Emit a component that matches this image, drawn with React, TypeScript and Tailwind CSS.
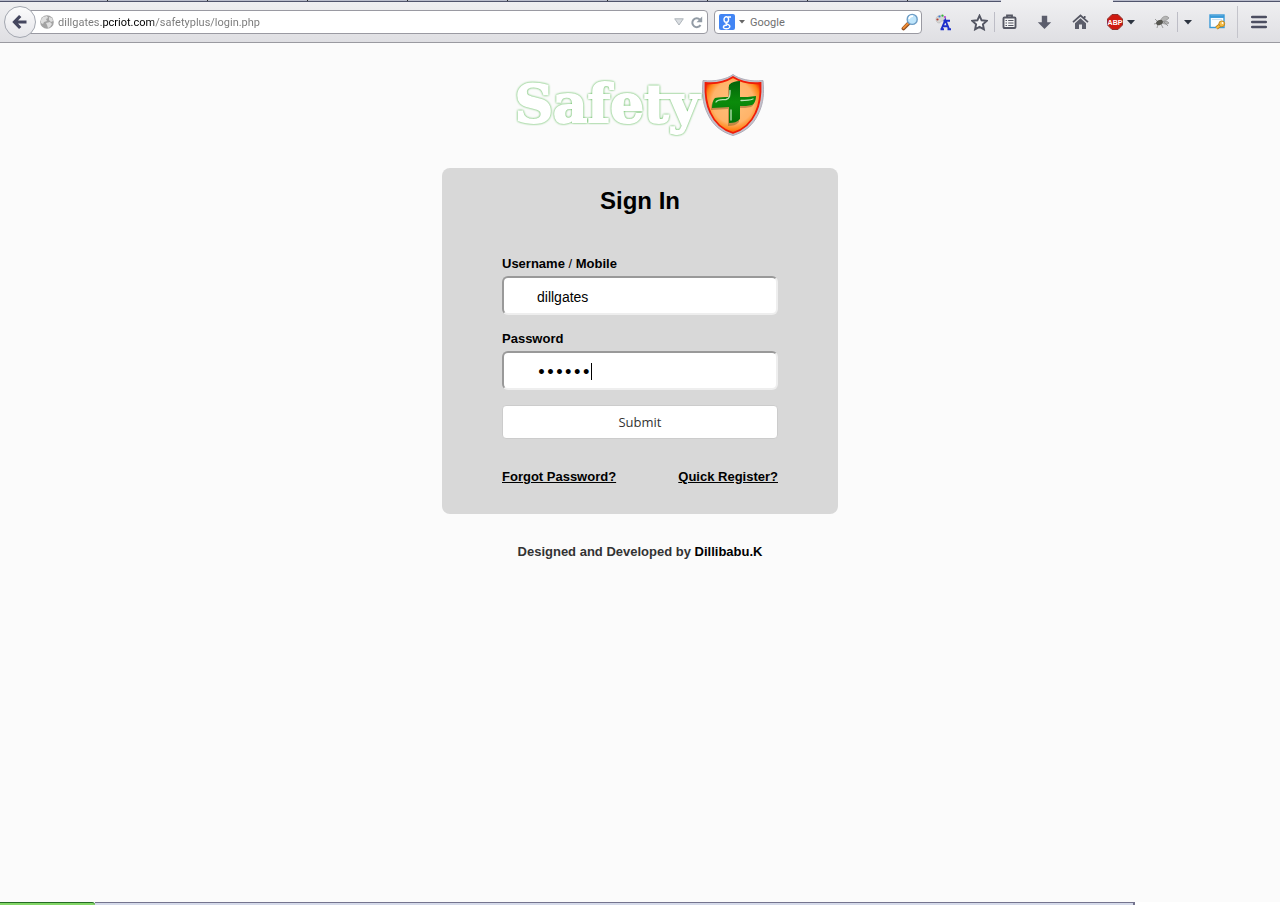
import React from "react";

const tabs = Array.from({ length: 9 }, (_, i) => i);

function Caret() {
  return (
    <svg width="8" height="5" viewBox="0 0 8 5" aria-hidden="true">
      <path d="M0 0h8L4 4.6z" fill="#2d3440" />
    </svg>
  );
}

function Divider() {
  return <span className="h-5 w-px bg-[#bdbdc6]" />;
}

function ToolButton({ label, width, children }: { label: string; width: string; children: React.ReactNode }) {
  return (
    <button type="button" aria-label={label} className={`flex h-full shrink-0 items-center justify-center gap-1 ${width}`}>
      {children}
    </button>
  );
}

function TabStrip() {
  return (
    <div className="flex h-[2px] bg-[#ebebee]">
      <div className="flex flex-1 border-b border-[#50546c] bg-[#b9bccb]">
        <span className="w-[8px]" />
        {tabs.map((i) => (
          <span key={i} className="w-[100px] border-r border-[#2c2f2c]" />
        ))}
      </div>
      <span className="w-[112px] rounded-t-sm bg-[#efeff1]" />
      <span className="w-[167px] border-b border-[#50546c] bg-[#b9bccb]" />
    </div>
  );
}

function UrlBar() {
  return (
    <div className="flex min-w-0 flex-1 items-center pl-1">
      <button
        type="button"
        aria-label="Back"
        className="z-10 flex h-8 w-8 shrink-0 items-center justify-center rounded-full border border-[#a3a7b0] bg-linear-to-b from-[#fbfbfc] to-[#e6e6ea]"
      >
        <svg width="16" height="16" viewBox="0 0 16 16" aria-hidden="true">
          <path d="M8.2 2 2.5 8l5.700 6M3 8h11.500" fill="none" stroke="#44465e" strokeWidth="3.200" />
        </svg>
      </button>
      <div className="-ml-2 flex h-6 min-w-0 flex-1 items-center rounded-r-sm border border-[#9a9aa2] bg-white pr-1 pl-[11px]">
        <svg width="14" height="14" viewBox="0 0 14 14" aria-hidden="true" className="shrink-0">
          <circle cx="7" cy="7" r="6.800" fill="#a3a3a3" />
          <path d="M1 5 3 2l4-1 1 2-2 1 1 2-3 1-1 2-2-1zM9 2l3 1 1 3-2 1-2-2zM6 8l4-1 2 2-2 3-2 1-1-3z" fill="#dedede" />
        </svg>
        <input
          aria-label="Address"
          defaultValue="dillgates.pcriot.com/safetyplus/login.php"
          className="mt-px ml-1 h-5 min-w-0 flex-1 bg-[linear-gradient(90deg,#777_43px,#000_43px,#000_96px,#777_96px)] bg-clip-text font-[Roboto,sans-serif] text-[11px] text-transparent outline-none"
        />
        <button type="button" aria-label="Show history" className="mr-[6px]">
          <svg width="10" height="8" viewBox="0 0 10 8" aria-hidden="true">
            <path d="M.7.8h8.600L5 7z" fill="#d9dde1" stroke="#aeb4ba" />
          </svg>
        </button>
        <button type="button" aria-label="Reload">
          <svg width="13" height="13" viewBox="0 0 13 13" aria-hidden="true">
            <path d="M10 3.800A4.400 4.400 0 1 0 10.500 9" fill="none" stroke="#929ba5" strokeWidth="2" />
            <path d="M12.200.6v5.700H6.500z" fill="#929ba5" />
          </svg>
        </button>
      </div>
    </div>
  );
}

function SearchBar() {
  return (
    <div className="ml-[6px] flex h-6 w-[208px] shrink-0 items-center rounded-sm border border-[#9a9aa2] bg-white pr-[2px] pl-1">
      <button type="button" aria-label="Choose search engine" className="flex items-center gap-1">
        <span className="flex h-4 w-4 items-center justify-center rounded-xs bg-[#4285f4]">
          <svg width="12" height="15" viewBox="0 0 12 15" fill="none" stroke="#fff" strokeWidth="1.400" aria-hidden="true">
            <ellipse cx="5.300" cy="4.600" rx="2.300" ry="2.800" />
            <path d="M7 2h3M6.500 7.200c-3 1-1 1.600.8 2.400 3 1.500 1.300 4.200-2 4.200-4 0-4-3.600.8-3.800" />
          </svg>
        </span>
        <svg width="6" height="4" viewBox="0 0 6 4" aria-hidden="true">
          <path d="M0 0h6L3 3.500z" fill="#666" />
        </svg>
      </button>
      <input
        aria-label="Search"
        placeholder="Google"
        className="mt-px ml-[5px] h-5 min-w-0 flex-1 bg-transparent font-[Roboto,sans-serif] text-[11px] text-black outline-none placeholder:text-[#707070]"
      />
      <button type="button" aria-label="Search the web">
        <svg width="18" height="18" viewBox="0 0 18 18" aria-hidden="true">
          <path d="m2.500 15.500 5.300-5.300" stroke="#8b4d21" strokeWidth="3.800" strokeLinecap="round" />
          <path d="m2.500 15 4.500-4.500" stroke="#ef8c36" strokeWidth="2" strokeLinecap="round" />
          <circle cx="11.200" cy="6.400" r="5" fill="#bfe5fb" stroke="#6d9dc6" strokeWidth="1.400" />
          <path d="M8 6c.4-2 1.800-3 4-2.800" stroke="#fff" strokeWidth="1.600" fill="none" />
        </svg>
      </button>
    </div>
  );
}

function Toolbar() {
  return (
    <div className="flex h-[41px] items-center border-b border-[#9a9aa0] bg-linear-to-b from-[#efeff1] to-[#dfdfe3]">
      <UrlBar />
      <SearchBar />
      <ToolButton label="Text colours" width="w-[42px]">
        <svg width="17" height="17" viewBox="0 0 17 17" aria-hidden="true">
          <path d="M1 5c0-4 7-5 9-2 2 2-1 4-3 4S6 9 4 9 1 7 1 5z" fill="#d5d5d3" stroke="#b5b5b5" strokeWidth=".6" />
          <circle cx="2.500" cy="5.500" r="1.100" fill="#b53c35" />
          <circle cx="4.500" cy="2.500" r="1.100" fill="#3d7ad4" />
          <circle cx="7.500" cy="1.700" r="1.100" fill="#36b53a" />
          <circle cx="10" cy="3" r="1.100" fill="#bd43d2" />
          <path d="M6.500 15.200 10.300 6l3.700 9.200M8 12.200h5M5.500 15.200h3.500m3.500 0h3.500M8.500 6.700h6.500" stroke="#1d2fcb" strokeWidth="1.900" fill="none" />
        </svg>
      </ToolButton>
      <ToolButton label="Bookmark this page" width="w-[30px]">
        <svg width="17" height="17" viewBox="0 0 17 17" aria-hidden="true">
          <path d="m8.500 1.700 2.100 4.600 5 .6-3.700 3.400 1 5-4.400-2.500-4.400 2.500 1-5L1.400 6.900l5-.6z" fill="#f3f3f5" stroke="#535562" strokeWidth="1.900" />
        </svg>
      </ToolButton>
      <Divider />
      <ToolButton label="Bookmarks" width="w-[29px]">
        <svg width="15" height="16" viewBox="0 0 15 16" aria-hidden="true">
          <path d="M5 3V1.500h5V3" fill="none" stroke="#555763" strokeWidth="1.800" />
          <rect x="1.500" y="3.500" width="12" height="10.500" rx="1" fill="#f4f4f5" stroke="#555763" strokeWidth="1.900" />
          <path d="M3.500 6.500h1.500m1.200 0h5.300M3.500 9h1.500m1.200 0h5.300M3.500 11.500h1.500m1.200 0h5.300" stroke="#555763" strokeWidth="1.100" />
        </svg>
      </ToolButton>
      <ToolButton label="Downloads" width="w-10">
        <svg width="15" height="15" viewBox="0 0 15 15" aria-hidden="true">
          <path d="M4.800.8h5.400v6.400h4L7.500 14 .8 7.200h4z" fill="#5b5d6c" />
        </svg>
      </ToolButton>
      <ToolButton label="Home" width="w-8">
        <svg width="17" height="16" viewBox="0 0 17 16" aria-hidden="true">
          <path d="m1 8.200 7.500-6.700L16 8.200M12.700 4V2" fill="none" stroke="#555763" strokeWidth="1.700" />
          <path d="M3 9.200 8.500 4.300 14 9.200V15h-4v-4.500H7V15H3z" fill="#5b5d6a" />
        </svg>
      </ToolButton>
      <ToolButton label="Adblock Plus" width="w-[50px]">
        <svg width="16" height="16" viewBox="0 0 16 16" aria-hidden="true">
          <path d="M5 .5h6L15.500 5v6L11 15.500H5L.5 11V5z" fill="#cf1a11" stroke="#8d332e" />
          <text x="8" y="11" textAnchor="middle" fontFamily="Liberation Sans, sans-serif" fontWeight="700" fontSize="7" fill="#fff">ABP</text>
        </svg>
        <Caret />
      </ToolButton>
      <ToolButton label="Firebug" width="w-[31px]">
        <svg width="16" height="14" viewBox="0 0 16 14" aria-hidden="true">
          <path d="M7 5C8 1 13 0 15 3c-2 2-5 4-8 4zM8 7c3-1 6-1 7 1-2 2-5 1-7 0z" fill="#b4b4b4" stroke="#8d8d8d" strokeWidth=".7" />
          <path d="m1 4 4 4M0 9l4-1m0 1-1 4m4-4 2 4m1-6 4 4" stroke="#888" strokeWidth=".8" />
          <ellipse cx="5.500" cy="7.500" rx="3.500" ry="2.500" fill="#55554f" transform="rotate(-25 5.500 7.500)" />
        </svg>
      </ToolButton>
      <Divider />
      <ToolButton label="Firebug options" width="w-[19px]"><Caret /></ToolButton>
      <ToolButton label="Saved passwords" width="w-10">
        <svg width="17" height="16" viewBox="0 0 17 16" aria-hidden="true">
          <rect x="1" y="1" width="14" height="12.500" fill="#fafdff" stroke="#3a9ad8" strokeWidth="1.400" />
          <path d="M1 2.700h14" stroke="#3a9ad8" strokeWidth="2.500" />
          <path d="M3 5.500h10" stroke="#cfe1ed" />
          <path d="m7.500 14 4.500-3.500" stroke="#bb7d16" strokeWidth="3.600" />
          <path d="m7.500 14 4.500-3.500" stroke="#f6bd45" strokeWidth="2" />
          <circle cx="12.800" cy="9.800" r="2.900" fill="#f6bd45" stroke="#c28a24" />
          <circle cx="13.500" cy="9" r=".9" fill="#fff" />
        </svg>
      </ToolButton>
      <span className="h-8 w-px bg-[#c4c4cb]" />
      <ToolButton label="Open menu" width="w-[42px]">
        <svg width="16" height="14" viewBox="0 0 16 14" aria-hidden="true">
          <path d="M1.200 2h13.600M1.200 7h13.600M1.200 12h13.600" stroke="#4c4e61" strokeWidth="2.600" strokeLinecap="round" />
        </svg>
      </ToolButton>
    </div>
  );
}

function Shield() {
  return (
    <svg width="64" height="64" viewBox="0 0 64 64" aria-hidden="true">
      <defs>
        <radialGradient id="shieldFill" cx="50%" cy="45%" r="58%">
          <stop offset="0" stopColor="#ffc07c" />
          <stop offset=".65" stopColor="#ffb46a" />
          <stop offset=".85" stopColor="#ff8518" />
          <stop offset="1" stopColor="#f02000" />
        </radialGradient>
        <linearGradient id="crossFill" x1="0" y1="0" x2="0" y2="1">
          <stop offset="0" stopColor="#04640a" />
          <stop offset=".5" stopColor="#0b8b0b" />
          <stop offset="1" stopColor="#047308" />
        </linearGradient>
      </defs>
      <path d="M32 1.500C26 6 14 9 2 7.500c-1 12-1 22 5 34C12 52 20 59 32 62.500 44 59 52 52 57 41.500c6-12 6-22 5-34C50 9 38 6 32 1.500z" fill="#c4c0cb" stroke="#b0adb9" />
      <path d="M32 4C25 8.500 15 11 4.500 10c-.5 11 0 20 5 30C14 50 21 56.500 32 60c11-3.500 18-10 22.500-20 5-10 5.500-19 5-30C49 11 39 8.500 32 4z" fill="url(#shieldFill)" stroke="#f01c08" strokeWidth="1.800" />
      <path d="M28 13c3-3 6-4 11-4v16c5 0 10 0 16-1 0 5-2 8-4 9-4 1-8 1-12 1v14c-3 3-6 4-11 4V35c-5 0-11 1-17 1 0-4 1-8 3-10 4-1 9-1 14-1z" fill="#7c5922" opacity=".45" transform="translate(-1 1)" />
      <path d="M28 12c3-3 6-4 11-4v16c5 0 10 0 16-1 0 5-2 8-4 9-4 1-8 1-12 1v13c-3 3-6 4-11 4V34c-5 0-11 1-17 1 0-4 1-8 3-10 4-1 9-1 14-1z" fill="url(#crossFill)" />
      <path d="M15 29c2-3 6-2 10-2.500 4-1 4-4 4-9M30 47V37M52 26c-4 1.500-8 1.500-12 1.500" fill="none" stroke="#d9f5d3" strokeWidth="1.300" strokeLinecap="round" opacity=".85" />
    </svg>
  );
}

const fieldClass =
  "h-[39px] w-full rounded-md border-2 border-t-[#999] border-r-[#eee] border-b-[#eee] border-l-[#999] bg-white pt-[2px] pr-3 pl-[33px] text-black outline-none";

export default function App() {
  return (
    <div className="flex min-h-screen flex-col bg-[#fbfbfb] font-['Liberation_Sans',Arial,sans-serif]">
      <header>
        <TabStrip />
        <Toolbar />
      </header>

      <main className="flex flex-1 flex-col items-center pt-[30px]">
        <h1 className="flex h-16 items-center justify-center gap-[2px]">
          <span className="pb-1 font-['DejaVu_Serif',serif] text-[53px] leading-[60px] font-bold text-white drop-shadow-[0_0_1px_#3fae3a] [-webkit-text-stroke:2px_#fff]">
            Safety
          </span>
          <Shield />
        </h1>

        <form
          onSubmit={(e) => e.preventDefault()}
          className="mt-[31px] flex w-full max-w-[396px] flex-col rounded-lg bg-[#d8d8d8] px-[60px] pt-[17px] pb-[27px] text-[13px] text-black"
        >
          <h2 className="text-center text-2xl leading-8 font-bold">Sign In</h2>

          <label htmlFor="username" className="mt-[37px] mb-[2px] leading-5 font-bold">
            Username <span className="font-normal">/</span> Mobile
          </label>
          <input id="username" type="text" defaultValue="dillgates" className={`${fieldClass} text-[14px]`} />

          <label htmlFor="password" className="mt-[14px] mb-[2px] leading-5 font-bold">Password</label>
          <div className="relative">
            <input id="password" type="password" defaultValue="secret" className={`${fieldClass} font-['DejaVu_Sans',sans-serif] text-[14px] font-bold`} />
            <span className="absolute top-3 left-[89px] h-[17px] w-px bg-black" />
          </div>

          <button
            type="submit"
            className="mt-[15px] h-[34px] rounded-sm border border-[#ccc] bg-white pt-[2px] font-['Open_Sans',sans-serif] text-[13px] text-[#333]"
          >
            Submit
          </button>

          <div className="mt-7 flex justify-between leading-5 font-bold">
            <a href="#forgot" className="underline">Forgot Password?</a>
            <a href="#register" className="underline">Quick Register?</a>
          </div>
        </form>

        <p className="mt-7 text-[13px] leading-5 font-bold text-[#333]">
          Designed and Developed by <a href="#author" className="text-black">Dillibabu.K</a>
        </p>
      </main>

      <footer className="flex h-[3px] bg-white">
        <span className="w-[95px] rounded-tr-sm border-t border-[#246b24] bg-[#83d667]" />
        <span className="flex-1 border-t border-r-2 border-[#74748e] bg-[#d5daea]" />
        <span className="w-[145px]" />
      </footer>
    </div>
  );
}
